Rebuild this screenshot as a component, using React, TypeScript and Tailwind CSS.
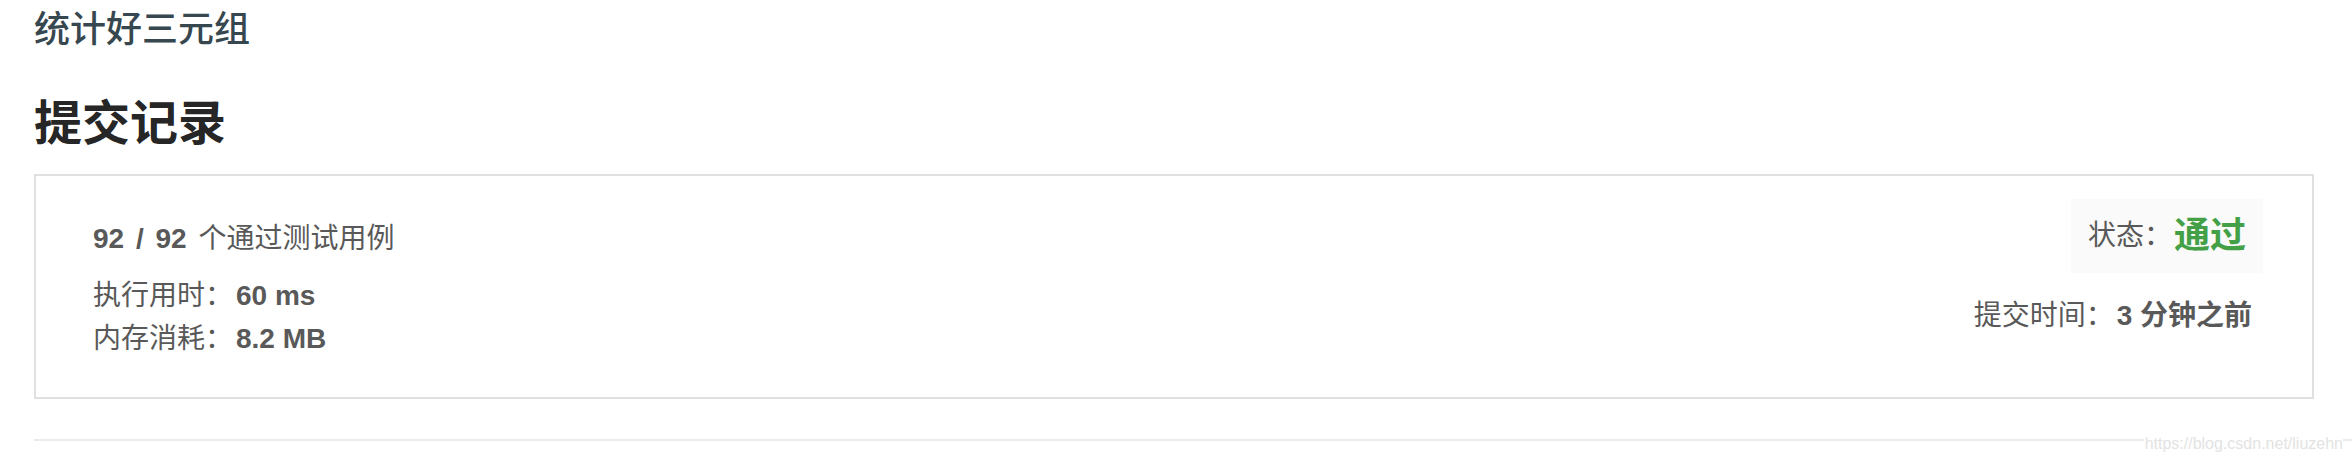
import React from 'react';

const font = { fontFamily: '"Liberation Sans", "Noto Sans CJK SC", sans-serif' };

export default function App() {
  return (
    <div className="relative w-[2352px] h-[456px] bg-white overflow-hidden" style={font}>
      <div className="pl-[34px] pr-[38px] pt-[6px]">
        <h2 className="text-[36px] leading-[48px] font-medium text-[#37474f]">统计好三元组</h2>
        <h1 className="mt-[40px] text-[48px] leading-[60px] font-bold text-[#262626]">提交记录</h1>

        <div className="mt-[20px] flex justify-between border-2 border-[#e0e0e0] pl-[57px] pr-[49px] pt-[41px] pb-[37px] text-[28px] text-[#595959]">
          <div>
            <div className="leading-[43px] [word-spacing:4px]">
              <span className="font-bold">92 / 92</span> 个通过测试用例
            </div>
            <div className="mt-[14px] leading-[43px]">
              执行用时：<span className="ml-[3px] font-bold">60 ms</span>
            </div>
            <div className="leading-[43px]">
              内存消耗：<span className="ml-[3px] font-bold">8.2 MB</span>
            </div>
          </div>

          <div className="flex flex-col items-end -mt-[18px]">
            <div className="flex items-center h-[74px] px-[17px] bg-[#fafafa]">
              <span>状态：</span>
              <span className="ml-[2px] text-[36px] font-bold text-[#43a047]">通过</span>
            </div>
            <div className="mt-[21px] mr-[11px] leading-[43px]">
              提交时间：<span className="ml-[3px] font-bold">3 分钟之前</span>
            </div>
          </div>
        </div>
      </div>

      <div className="mt-[40px] ml-[34px] h-[2px] bg-[#ebebeb]" />

      <div className="absolute right-[9px] bottom-[2px] bg-white pl-[1px] text-[16px] leading-[20px] text-[#e3e3e3]">
        https://blog.csdn.net/liuzehn
      </div>
    </div>
  );
}
